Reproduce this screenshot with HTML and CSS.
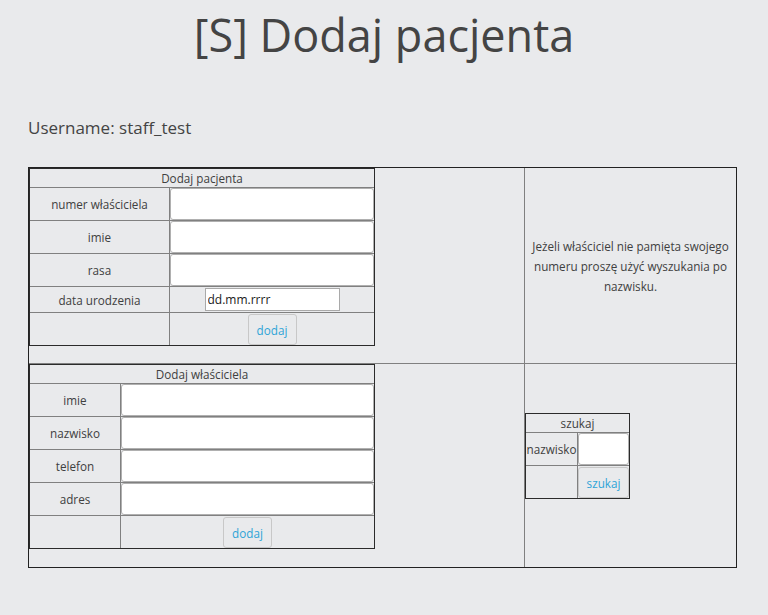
FILE: index.html
```html
<!DOCTYPE html>
<html lang="pl">
<head>
<meta charset="utf-8">
<title>[S] Dodaj pacjenta</title>
<link rel="stylesheet" href="styles.css">
</head>
<body>
<h1 class="title">[S] Dodaj pacjenta</h1>
<p class="user">Username: staff_test</p>
<table class="layout">
  <tr class="row-first">
    <td class="col-main">
      <form class="form form-patient">
        <table class="grid grid-patient">
          <tr><td class="head" colspan="2">Dodaj pacjenta</td></tr>
          <tr><td class="label">numer właściciela</td><td class="field"><input class="input" type="text"></td></tr>
          <tr><td class="label">imie</td><td class="field"><input class="input" type="text"></td></tr>
          <tr><td class="label">rasa</td><td class="field"><input class="input" type="text"></td></tr>
          <tr><td class="label">data urodzenia</td><td class="field"><input class="date" type="text" value="dd.mm.rrrr"></td></tr>
          <tr><td class="label"></td><td class="field"><button class="btn" type="button">dodaj</button></td></tr>
        </table>
      </form>
    </td>
    <td class="col-side">
      <p class="note">Jeżeli właściciel nie pamięta swojego numeru proszę użyć wyszukania po nazwisku.</p>
    </td>
  </tr>
  <tr>
    <td class="col-main">
      <form class="form form-owner">
        <table class="grid grid-owner">
          <tr><td class="head" colspan="2">Dodaj właściciela</td></tr>
          <tr><td class="label">imie</td><td class="field"><input class="input" type="text"></td></tr>
          <tr><td class="label">nazwisko</td><td class="field"><input class="input" type="text"></td></tr>
          <tr><td class="label">telefon</td><td class="field"><input class="input" type="text"></td></tr>
          <tr><td class="label">adres</td><td class="field"><input class="input" type="text"></td></tr>
          <tr><td class="label"></td><td class="field"><button class="btn" type="button">dodaj</button></td></tr>
        </table>
      </form>
    </td>
    <td class="col-side">
      <form class="form form-search">
        <table class="grid grid-search">
          <tr><td class="head" colspan="2">szukaj</td></tr>
          <tr><td class="label">nazwisko</td><td class="field"><input class="input" type="text"></td></tr>
          <tr><td class="label"></td><td class="field"><button class="btn btn-full" type="button">szukaj</button></td></tr>
        </table>
      </form>
    </td>
  </tr>
</table>
</body>
</html>
```
FILE: styles.css
```css
* {
  box-sizing: border-box;
}

body {
  margin: 0;
  background: #e9eaec;
  font-family: "Open Sans", "Noto Sans", sans-serif;
  color: #444;
}

.title {
  margin: 10px 0 0;
  font-size: 45px;
  line-height: 50px;
  font-weight: 400;
  text-align: center;
  color: #444;
}

.user {
  margin: 56px 0 27px;
  padding-left: 28px;
  font-size: 17px;
  line-height: 24px;
  color: #444;
}

.layout {
  margin-left: 28px;
  width: 709px;
  border: 1px solid #222;
  border-spacing: 0;
  border-collapse: separate;
}

.layout > tbody > tr > td {
  padding: 0;
}

.col-main {
  width: 496px;
  border-right: 1px solid #808080;
  vertical-align: top;
}

.col-side {
  width: 211px;
  vertical-align: middle;
  text-align: center;
}

.row-first > td {
  border-bottom: 1px solid #808080;
}

.note {
  margin: 0;
  font-size: 11.7px;
  line-height: 20px;
  color: #404040;
}

.form {
  margin: 0;
}

.form-patient {
  margin-bottom: 17px;
}

.form-owner {
  margin-bottom: 18px;
}

.form-search {
  margin-bottom: 19px;
}

.grid {
  border: 1px solid #2b2b2b;
  border-spacing: 0;
  border-collapse: separate;
  font-size: 11.7px;
  color: #404040;
}

.grid td {
  padding: 0;
  text-align: center;
  vertical-align: middle;
}

.grid tr:not(:last-child) > td {
  border-bottom: 1px solid #808080;
}

.grid .head {
  line-height: 18px;
}

.grid .label {
  border-right: 1px solid #808080;
  white-space: nowrap;
}

.grid-patient {
  width: 346px;
}

.grid-patient .label {
  width: 140px;
}

.grid-patient .field {
  width: 204px;
}

.grid-owner {
  width: 346px;
}

.grid-owner .label {
  width: 91px;
}

.grid-owner .field {
  width: 253px;
}

.grid-search {
  width: 105px;
}

.grid-search .label {
  width: 52px;
}

.grid-search .field {
  width: 51px;
}

.input {
  display: block;
  width: 100%;
  height: 32px;
  margin: 0;
  padding: 0 6px;
  border: 1px solid #b0b0b0;
  border-radius: 3px;
  background: #fff;
  font: 13px "Liberation Sans", Arial, sans-serif;
}

.date {
  display: block;
  width: 135px;
  height: 23px;
  margin: 1px auto;
  padding: 0 2px;
  border: 1px solid #a9a9a9;
  border-radius: 0;
  background: #fff;
  color: #1a1a1a;
  font-family: "Open Sans", "Noto Sans", sans-serif;
  font-size: 12px;
}

.btn {
  display: block;
  width: 49px;
  height: 31px;
  margin: 1px auto 0;
  padding: 0;
  border: 1px solid #c8c8c8;
  border-radius: 3px;
  background: transparent;
  color: #2fa4d7;
  font-family: "Open Sans", "Noto Sans", sans-serif;
  font-size: 11.7px;
}

.btn-full {
  width: 100%;
}
```
